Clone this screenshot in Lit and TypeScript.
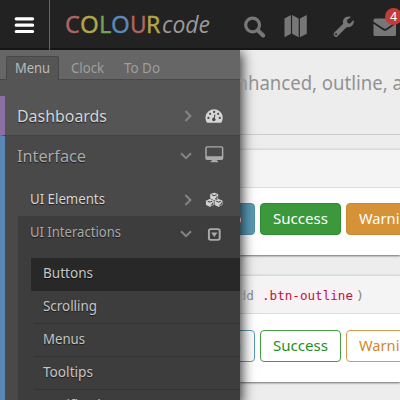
import { LitElement, html, css, svg } from "lit";
import { customElement, property } from "lit/decorators.js";

/** A single-line label whose glyphs are condensed or widened to a set width. */
@customElement("fit-label")
class FitLabel extends LitElement {
  @property() text = "";
  @property({ type: Number }) width = 0;
  static styles = css`
    :host { display: inline-block; white-space: pre; flex: none; }
    .inner { display: inline-block; transform-origin: 0 50%; }
  `;
  render() {
    return html`<span class="inner">${this.text}</span>`;
  }
  firstUpdated() {
    const el = this.renderRoot.querySelector(".inner") as HTMLElement;
    const natural = el.getBoundingClientRect().width;
    el.style.transform = `scaleX(${this.width / natural})`;
    this.style.width = `${this.width}px`;
  }
}

const label = (text: string, width: number) =>
  html`<fit-label .text=${text} .width=${width}></fit-label>`;

const chevron = (open: boolean) => html`<svg class="chev ${open ? "open" : ""}" width="12" height="12" viewBox="0 0 12 12">
  <path d=${open ? "M1 3.2l5 5 5-5" : "M3.4 1l5 5-5 5"} fill="none" stroke="#858585" stroke-width="2"/></svg>`;

const icons = {
  gauge: svg`<path fill="#d6d6d6" d="M1.7 16.4A8.8 8.8 0 1 1 16.9 16.4Q16.6 17 16 17H2.6Q2 17 1.7 16.4Z"/>
    <g fill="#4a4a4a"><circle cx="3.5" cy="12" r="1.15"/><circle cx="5.2" cy="7.8" r="1.15"/><circle cx="9.3" cy="5.8" r="1.15"/><circle cx="13.4" cy="7.8" r="1.15"/><circle cx="15.1" cy="12" r="1.15"/><circle cx="9" cy="13.6" r="1.8"/></g>
    <path d="M9 13.6L10.2 8.6" stroke="#4a4a4a" stroke-width="1.1"/>`,
  screen: svg`<rect x="1" y="1.7" width="17" height="12.6" rx="1.2" fill="none" stroke="#aaa" stroke-width="1.5"/>
    <path d="M1 11.2h17v3H1zM7.4 14h4.4l.5 2.2h1v1.2H5.8v-1.2h1z" fill="#aaa"/>`,
  cubes: svg`<g stroke="#d2d2d2" stroke-width="1.1" stroke-linejoin="round">
    ${[[9.4, 6.4], [5, 13], [13.8, 13]].map(
      ([x, y]) => svg`<path fill="#d2d2d2" d="M${x} ${y - 3.4}l3.5 1.4v3.7l-3.5 1.7-3.5-1.7v-3.7z"/>
        <path fill="none" stroke="#333" stroke-width="1" d="M${x - 2.3} ${y - 1.7}l2.3.9 2.3-.9M${x + 1} ${y + 2.4}l1.9-.9v-1.7"/>`
    )}</g>`,
  select: svg`<rect x="4" y="4" width="11" height="11" rx="1.8" fill="none" stroke="#aaa" stroke-width="2"/>
    <path d="M6.3 7.4h6.4L9.5 12z" fill="#aaa"/>`,
};

const letters: [string, string, number][] = [
  ["C", "red", 14.8], ["O", "yellow", 18.8], ["L", "green", 12.4],
  ["O", "blue", 18.8], ["U", "red", 16.6], ["R", "yellow", 14.4],
];

const subItems: [string, number][] = [
  ["Buttons", 50], ["Scrolling", 54], ["Menus", 42], ["Tooltips", 50], ["Notifications", 81],
];

@customElement("app-root")
class AppRoot extends LitElement {
  static styles = css`
    :host { display: block; width: 400px; height: 400px; overflow: hidden; position: relative;
      font-family: "Noto Sans", "Open Sans", sans-serif; font-size: 13.6px; background: #ededed; }
    * { box-sizing: border-box; }
    svg { display: block; flex: none; }
    .top { height: 50px; background: #222; border-bottom: 2px solid #161616; display: flex; align-items: stretch; position: relative; }
    .burger { width: 50px; border-right: 1px solid #666; height: 50px; padding: 16px 0 0 14px; flex: none; }
    .logo { display: flex; align-items: baseline; height: 48px; line-height: 48px; padding-left: 15px; width: 190px; font-size: 23.5px; -webkit-text-stroke: .35px; }
    .red { color: #b06464; } .yellow { color: #b5a547; } .green { color: #72a255; } .blue { color: #5b88b8; }
    .code { color: #999; font-style: italic; font-family: "Open Sans", sans-serif; font-size: 24px; padding-left: 1px; -webkit-text-stroke: 0; }
    .tools { flex: none; }
    .badge { position: absolute; left: 385px; top: 8px; width: 17px; height: 17px; border-radius: 50%; background: #c13c37; color: #fff;
      font-size: 12.5px; line-height: 18px; text-align: center; }
    .body { display: flex; height: 350px; }
    .side { width: 240px; height: 350px; flex: none; background: #555; box-shadow: 0 4px 12px 2px rgba(0,0,0,.8); position: relative; clip-path: inset(0 -30px 0 0); }
    .tabs { height: 30px; background: #666; display: flex; box-shadow: inset 0 -1px #484848; padding: 6px 0 0 6px; color: #9e9e9e; line-height: 22px; }
    .tab { height: 24px; width: 53px; background: #555; border: 1px solid #484848; border-bottom: 0; border-radius: 2px 2px 0 0; padding-left: 8px; line-height: 21px; color: #bbb; }
    .clock { padding-left: 12px; width: 65px; }
    .clock, .todo { line-height: 23px; }
    .row { display: flex; align-items: center; text-shadow: 0 1px 1px rgba(0,0,0,.6); }
    .row fit-label { margin-right: auto; }
    .chev { margin-right: 11px; }
    .chev.open { margin-right: 13px; }
    .end { width: 18.6px; margin-right: 16px; }
    .dash { margin-top: 16px; height: 39px; border-left: 5px solid #8d70a3; padding-left: 12px; font-size: 17px; color: #d6d6d6; }
    .iface { border-left: 5px solid #5b87b5; background: #494949; height: 265px; border-top: 1px solid #424242; }
    .head { height: 43px; padding: 0 0 4px 12px; font-size: 17px; color: #aaa; }
    .elements { height: 37px; padding: 2px 0 0 25px; color: #d6d6d6; }
    .elements svg { position: relative; top: 1px; }
    .nest { margin-left: 13px; background: #3d3d3d; height: 184px; }
    .inter { height: 42px; padding: 0 0 11px 12px; color: #aaa; }
    .inter svg { position: relative; top: 3px; }
    .inter .chev { top: 2px; }
    .head .end { position: relative; top: -1px; }
    .sub { margin-left: 13px; height: 33px; line-height: 30px; padding-left: 12px; color: #c5c5c5; text-shadow: 0 1px 1px rgba(0,0,0,.6); background: linear-gradient(#333,#333) 3px 100% / 100% 1px no-repeat; }
    .sub.on { background: #282828; }
    .main { width: 160px; flex: none; overflow: hidden; }
    .intro { height: 85px; border-bottom: 1px solid #ccc; color: #929292; font-size: 19.6px; line-height: 26px; padding-top: 20px; white-space: nowrap; }
    .intro .line { margin-left: -14px; display: flex; }
    .card { margin-top: 14px; border-top: 1px solid #d8d8d8; background: #fff; box-shadow: 0 1px 2px rgba(0,0,0,.55); }
    .title { background: #f4f4f4; border-bottom: 1px solid #ddd; height: 38px; }
    .c1 { height: 106px; }
    .c2 { height: 107px; margin-top: 20px; font-family: "DejaVu Sans Mono", "Liberation Mono", monospace; }
    .mono { color: #888; display: flex; padding: 10px 0 0 0; line-height: 20px; font-size: 13px; }
    .mono .lead { margin-left: -9px; width: 27px; }
    .mono .hl { background: #f9f2f4; color: #c2103f; width: 97px; height: 20px; padding-left: 4px; margin-right: 1px; border-radius: 3px; }
    .btns { display: flex; gap: 5px; padding-top: 15px; margin-left: -41px; font-family: "Noto Sans", sans-serif; line-height: 30px; }
    .c2 .btns { padding-top: 16px; }
    .btn { height: 32px; border: 1px solid; border-radius: 4px; flex: none; color: #fff; padding-left: 12px; }
    .info { width: 56px; padding-left: 14px; background: #5a9bb5; border-color: #4f8fa9; }
    .ok { width: 81px; background: #3b983b; border-color: #318a31; }
    .warn { width: 82px; background: #d69237; border-color: #c98a35; }
    .o { background: #fff; }
    .o.info { color: #4a93b0; border-color: #5a9bb5; } .o.ok { color: #259025; border-color: #459c45; } .o.warn { color: #d1882b; border-color: #d69a50; }
  `;

  buttons(outline: boolean) {
    const o = outline ? "btn o" : "btn";
    return html`<div class="btns">
      <div class="${o} info">${label("Info", 27)}</div>
      <div class="${o} ok">${label("Success", 55)}</div>
      <div class="${o} warn">${label("Warning", 58.5)}</div>
    </div>`;
  }

  render() {
    return html`
      <div class="top">
        <div class="burger"><svg width="21" height="19" viewBox="0 0 21 19"><path d="M2.2 2.8h16.4M2.2 9.2h16.4M2.2 15.5h16.4" stroke="#fff" stroke-width="3.2" stroke-linecap="round"/></svg></div>
        <div class="logo">
          ${letters.map(([ch, cls, w]) => html`<span class=${cls}>${label(ch, w)}</span>`)}
          <span class="code">${label("code", 48)}</span>
        </div>
        <svg class="tools" width="160" height="48" viewBox="240 0 160 48" fill="#777">
          <circle cx="252.6" cy="25" r="6.9" fill="none" stroke="#777" stroke-width="3.2"/>
          <path d="M258 30.5l5.2 5" stroke="#777" stroke-width="4" stroke-linecap="round"/>
          <path d="M284.5 18.4l6.4-3.4v18.8l-6.4 3.4zM292.1 15l6.6 3.4v18.8l-6.6-3.4zM299.9 18.4l6.9-3.4v18.8l-6.9 3.4z"/>
          <path fill-rule="evenodd" d="M353.7 20.3c.7 4.200-2.700 7.700-7.100 6.900L337.800 36a2.450 2.450 0 0 1-3.500-3.500L343.200 23.800c-1.300-4.400 2.200-8 6.900-7.100l.7.5-3.800 2.700.3 2.900 2.700 1 3.200-3.500zM336 33.200a1 1 0 1 0 .1 2 1 1 0 0 0-.1-2z"/>
          <path d="M375 18.500h19.500q1.500 0 1.500 1.500v1.700L386.500 28.200q-1.500 1-3 0L373.500 21.700V20q0-1.500 1.500-1.500zM373.500 23.700l9.700 6.500q1.800 1.100 3.600 0l9.200-6.500v10.800q0 1.500-1.500 1.500H375q-1.500 0-1.500-1.500z"/>
        </svg>
        <div class="badge">4</div>
      </div>
      <div class="body">
        <div class="side">
          <div class="tabs">
            <div class="tab">${label("Menu", 35)}</div>
            <div class="clock">${label("Clock", 33)}</div>
            <div class="todo">${label("To Do", 36)}</div>
          </div>
          <div class="row dash">${label("Dashboards", 90)}${chevron(false)}<svg class="end" width="19" height="19" viewBox="0 0 19 19">${icons.gauge}</svg></div>
          <div class="iface">
            <div class="row head">${label("Interface", 69)}${chevron(true)}<svg class="end" width="19" height="19" viewBox="0 0 19 19">${icons.screen}</svg></div>
            <div class="row elements">${label("UI Elements", 75)}${chevron(false)}<svg class="end" width="19" height="19" viewBox="0 0 19 19">${icons.cubes}</svg></div>
            <div class="nest">
              <div class="row inter">${label("UI Interactions", 91)}${chevron(true)}<svg class="end" width="19" height="19" viewBox="0 0 19 19">${icons.select}</svg></div>
              ${subItems.map(([t, w], i) => html`<div class="sub ${i === 0 ? "on" : ""}">${label(t, w)}</div>`)}
            </div>
          </div>
        </div>
        <div class="main">
          <div class="intro"><div class="line">${label("enhanced, outline, and more", 251)}</div></div>
          <div class="card c1"><div class="title"></div>${this.buttons(false)}</div>
          <div class="card c2">
            <div class="title mono"><div class="lead">${label("add", 23)}</div><div class="hl">${label(".btn-outline", 91)}</div>${label(")", 8)}</div>
            ${this.buttons(true)}
          </div>
        </div>
      </div>`;
  }
}
